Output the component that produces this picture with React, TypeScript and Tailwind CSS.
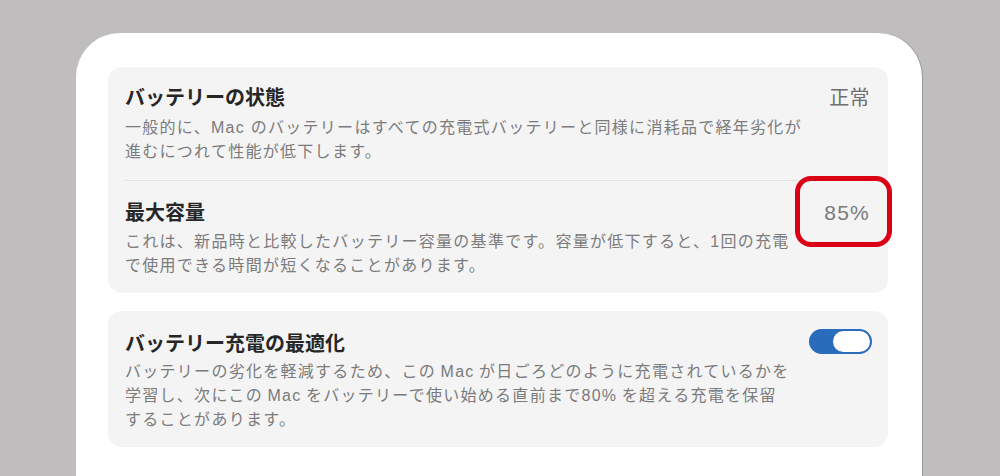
export default function App() {
  const font = { fontFamily: '"Liberation Sans", "Noto Sans CJK JP", sans-serif' };
  return (
    <div className="h-[476px] w-[1000px] overflow-hidden bg-[#c0bdbe] pt-[33px] pl-[76px]" style={font}>
      <div className="h-[460px] w-[846px] rounded-t-[44px] bg-white pr-[34px] pl-[32px] pt-[34px] shadow-[1px_0_0_#9a9a9a]">
        {/* Battery health card */}
        <div className="rounded-[14px] bg-[#f4f4f5] pr-[18px] pl-[17px] pt-[17px] pb-[15px]">
          <div className="flex items-start justify-between">
            <div>
              <h2 className="text-[20px] leading-[28px] font-semibold text-[#262626]">バッテリーの状態</h2>
              <p className="mt-[4px] text-[16px] leading-[24px] tracking-[0.08em] whitespace-nowrap text-[#7b7b7b]">
                一般的に、Mac のバッテリーはすべての充電式バッテリーと同様に消耗品で経年劣化が
                <br />
                進むにつれて性能が低下します。
              </p>
            </div>
            <span className="text-[20px] leading-[28px] tracking-[0.02em] text-[#6f6f6f]">正常</span>
          </div>

          <div className="mt-[16px] h-px bg-[#e2e2e3]" />

          <div className="relative mt-[18px] flex items-start justify-between">
            <div>
              <h2 className="text-[20px] leading-[28px] font-semibold text-[#262626]">最大容量</h2>
              <p className="mt-[3px] text-[16px] leading-[24px] tracking-[0.08em] whitespace-nowrap text-[#7b7b7b]">
                これは、新品時と比較したバッテリー容量の基準です。容量が低下すると、1回の充電
                <br />
                で使用できる時間が短くなることがあります。
              </p>
            </div>
            <span className="text-[21px] leading-[28px] tracking-[0.06em] text-[#7a7a7a]">85%</span>
            <div className="absolute top-[-23px] right-[-22px] h-[71px] w-[97px] rounded-[16px] border-[5px] border-[#dc0014]" />
          </div>
        </div>

        {/* Optimized charging card */}
        <div className="mt-[18px] flex items-start justify-between rounded-[14px] bg-[#f4f4f5] pr-[16px] pl-[17px] pt-[19px] pb-[15px]">
          <div>
            <h2 className="text-[20px] leading-[28px] font-semibold text-[#262626]">バッテリー充電の最適化</h2>
            <p className="mt-[2px] text-[16px] leading-[24px] tracking-[0.08em] whitespace-nowrap text-[#7b7b7b]">
              バッテリーの劣化を軽減するため、この{'\u2009'}Mac{'\u2009'}が日ごろどのように充電されているかを
              <br />
              学習し、次にこの{'\u2009'}Mac{'\u2009'}をバッテリーで使い始める直前まで80%{'\u2009'}を超える充電を保留
              <br />
              することがあります。
            </p>
          </div>
          <div className="mt-[-1px] flex h-[25px] w-[63px] items-center justify-end rounded-full bg-[#2a6cbc] pr-[2px]">
            <div className="h-[21px] w-[37px] rounded-full bg-white" />
          </div>
        </div>
      </div>
    </div>
  );
}
